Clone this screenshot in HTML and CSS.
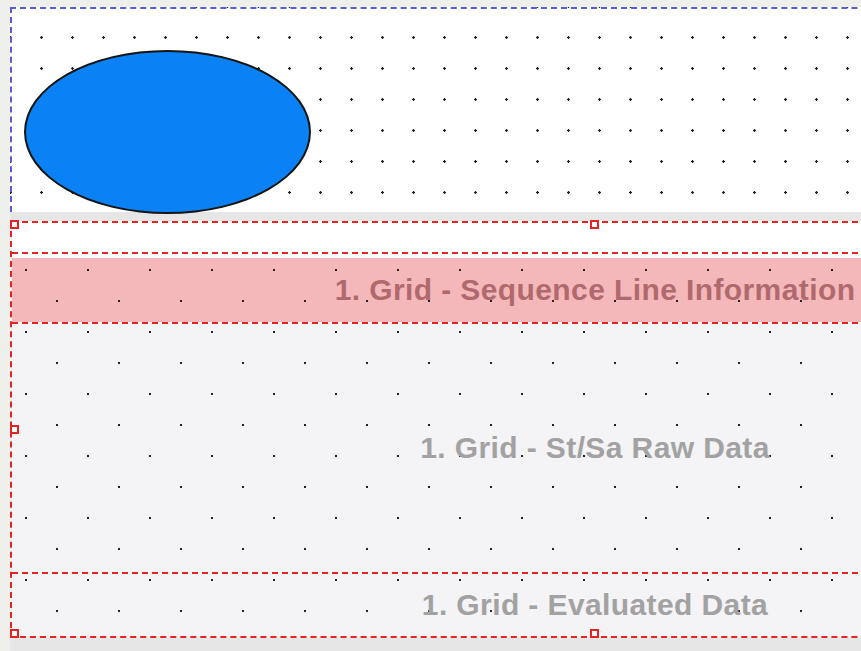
FILE: index.html
```html
<!DOCTYPE html>
<html lang="en">

<head>
    <meta charset="UTF-8">
    <meta name="viewport" content="width=device-width, initial-scale=1.0">
    <title>Report Designer</title>
    <link rel="stylesheet" href="styles.css">
</head>

<body>
    <div class="report">
        <div class="page-header">
            <div class="ellipse"></div>
        </div>
        <div class="separator"></div>

        <div class="bands">
            <div class="band band-blank"></div>
            <div class="band band-seq">
                <div class="band-title title-seq">1. Grid - Sequence Line Information</div>
            </div>
            <div class="band band-raw">
                <div class="band-title">1. Grid - St/Sa Raw Data</div>
            </div>
            <div class="band band-eval">
                <div class="band-title">1. Grid - Evaluated Data</div>
            </div>

            <!-- selection handles -->
            <span class="handle handle-tl"></span>
            <span class="handle handle-tm"></span>
            <span class="handle handle-ml"></span>
            <span class="handle handle-bl"></span>
            <span class="handle handle-bm"></span>
        </div>
        <div class="footer-strip"></div>
    </div>
</body>

</html>
```

FILE: styles.css
```css
body {
    margin: 0;
    background-color: #efefec;
    overflow: hidden;
    font-family: "Liberation Sans", Arial, sans-serif;
}

.report {
    width: 1168px;
    margin: 7px 0 0 10px;
}

.page-header {
    height: 203px;
    border-top: 2px dashed #5b5bd4;
    border-left: 2px dashed #5b5bd4;
    background:
        radial-gradient(circle, #222 1px, transparent 1.5px) 26px 22px / 31px 31px fixed,
        #fff;
}

.ellipse {
    width: 287px;
    height: 164px;
    margin: 41px 0 0 12px;
    box-sizing: border-box;
    border: 2px solid #151515;
    border-radius: 50%;
    background-color: #0a82f6;
    position: relative;
    z-index: 1;
}

.separator {
    height: 9px;
    background-color: #e6e6e6;
}

.bands {
    position: relative;
    border-left: 2px dashed #e62222;
    border-bottom: 2px dashed #e62222;
}

.band {
    border-top: 2px dashed #e62222;
    background:
        radial-gradient(circle, #222 1px, transparent 1.5px) 26px 22px / 62px 62px fixed,
        radial-gradient(circle, #222 1px, transparent 1.5px) 57px 53px / 62px 62px fixed,
        #f4f3f6;
}

.band-blank {
    height: 29px;
    background: #fff;
}

.band-seq {
    height: 70px;
    padding-top: 4px;
    box-sizing: border-box;
    background-color: #fff;
}

.band-raw {
    height: 248px;
}

.band-eval {
    height: 62px;
}

.band-title {
    height: 100%;
    display: flex;
    align-items: center;
    justify-content: center;
    font-size: 30px;
    font-weight: bold;
    letter-spacing: 0.4px;
    white-space: nowrap;
    color: #a2a2a2;
}

.title-seq {
    height: 64px;
    color: #b06a6e;
    background:
        radial-gradient(circle, #222 1px, transparent 1.5px) 26px 22px / 62px 62px fixed,
        radial-gradient(circle, #222 1px, transparent 1.5px) 57px 53px / 62px 62px fixed,
        #f5b8ba;
}

.handle {
    position: absolute;
    width: 9px;
    height: 9px;
    box-sizing: border-box;
    border: 2px solid #e62222;
    background-color: #fff;
}

.handle-tl {
    left: -2px;
    top: -1px;
}

.handle-tm {
    left: 578px;
    top: -1px;
}

.handle-ml {
    left: -2px;
    top: calc(50% - 4px);
}

.handle-bl {
    left: -2px;
    bottom: -2px;
}

.handle-bm {
    left: 578px;
    bottom: -2px;
}

.footer-strip {
    height: 20px;
    background-color: #e6e6e6;
}
```
